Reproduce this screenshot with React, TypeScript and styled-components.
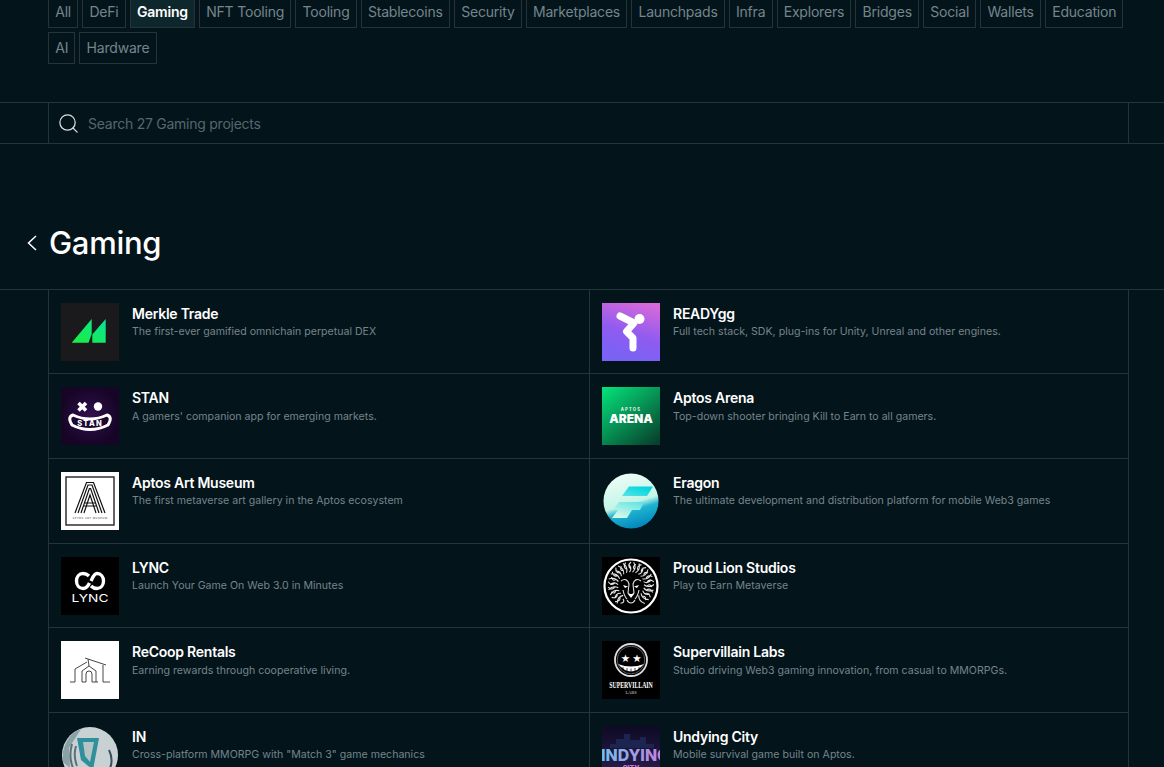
import React from "react";
import styled, { createGlobalStyle } from "styled-components";
import { Search } from "lucide-react";

const GlobalStyle = createGlobalStyle`
  html, body {
    margin: 0;
    height: 767px;
    overflow: hidden;
    background: #04141b;
    font-family: "Inter", "Liberation Sans", sans-serif;
  }
`;

const Page = styled.div`
  width: 1164px;
  height: 767px;
  overflow: hidden;
  box-sizing: border-box;
  padding-top: 1px;
`;

const TagList = styled.div`
  display: flex;
  flex-wrap: wrap;
  gap: 4px;
  margin: -5px 36px 0 48px;
`;

const Tag = styled.div<{ $active?: boolean }>`
  box-sizing: border-box;
  height: 32px;
  padding: 0 6.2px 1px;
  display: flex;
  align-items: center;
  border: 1px solid #25343a;
  background: ${(p) => (p.$active ? "#0e272d" : "transparent")};
  color: ${(p) => (p.$active ? "#ffffff" : "#74858c")};
  font-size: 14px;
  font-weight: ${(p) => (p.$active ? 600 : 400)};
  letter-spacing: -0.2px;
  white-space: nowrap;
`;

const SearchBar = styled.div`
  box-sizing: border-box;
  margin-top: 38px;
  height: 42px;
  border-top: 1px solid #25343a;
  border-bottom: 1px solid #25343a;
  padding: 0 35px 0 48px;
`;

const SearchInner = styled.div`
  height: 100%;
  display: flex;
  align-items: center;
  gap: 8px;
  padding-left: 8px;
  border-left: 1px solid #25343a;
  border-right: 1px solid #25343a;
  color: #56676d;
  font-size: 14px;
  letter-spacing: -0.25px;
  & svg {
    color: #d8dfe0;
  }
`;

const Heading = styled.div`
  margin-top: 76px;
  height: 45px;
  display: flex;
  align-items: center;
  gap: 12px;
  padding-left: 27px;
  color: #ffffff;
  font-size: 31px;
  font-weight: 500;
  letter-spacing: -0.3px;
`;

const ListOuter = styled.div`
  margin-top: 23.6px;
  border-top: 1px solid #25343a;
  padding: 0 35px 0 48px;
`;

const Grid = styled.div`
  display: grid;
  grid-template-columns: 541px 540px;
  border-right: 1px solid #25343a;
`;

const Cell = styled.div`
  box-sizing: border-box;
  height: 84.67px;
  padding: 13px 12px 0;
  display: flex;
  gap: 13px;
  border-left: 1px solid #25343a;
  border-bottom: 1px solid #25343a;
`;

const LogoBox = styled.div`
  width: 58px;
  height: 58px;
  flex: none;
  & svg {
    display: block;
    width: 58px;
    height: 58px;
  }
`;

const TextCol = styled.div`
  padding-top: 2px;
`;

const Title = styled.div`
  color: #ffffff;
  font-size: 14px;
  font-weight: 600;
  line-height: 18px;
  letter-spacing: -0.25px;
`;

const Desc = styled.div`
  margin-top: 1.5px;
  color: #74858c;
  font-size: 10.6px;
  line-height: 16px;
  white-space: nowrap;
`;

const BackChevron = () => (
  <svg width="10" height="16" viewBox="0 0 10 16" fill="none">
    <path d="M9 1 L1.5 8 L9 15" stroke="#ffffff" strokeWidth="1.5" />
  </svg>
);

const MerkleLogo = () => (
  <svg viewBox="0 0 58 58">
    <defs>
      <linearGradient id="mk" x1="0" y1="1" x2="1" y2="0">
        <stop offset="0" stopColor="#1bf03c" />
        <stop offset="1" stopColor="#08e29a" />
      </linearGradient>
    </defs>
    <rect width="58" height="58" fill="#1a1a1c" />
    <path d="M10.7 39.7 L30.7 16 V31 L27.5 39.7 Z M31.3 31.5 L44.7 16 V39.7 H31.3 Z" fill="url(#mk)" />
  </svg>
);

const ReadyLogo = () => (
  <svg viewBox="0 0 58 58">
    <defs>
      <linearGradient id="rd" x1="0.9" y1="0" x2="0.6" y2="1">
        <stop offset="0" stopColor="#dd69d9" />
        <stop offset="0.6" stopColor="#8f5bf0" />
        <stop offset="1" stopColor="#7a62f5" />
      </linearGradient>
    </defs>
    <rect width="58" height="58" fill="url(#rd)" />
    <circle cx="37.5" cy="16" r="5" fill="#fff" />
    <path d="M18 13 L32 20 L24.5 28.5 L31 35 V45" fill="none" stroke="#fff" strokeWidth="7" strokeLinecap="round" strokeLinejoin="round" />
  </svg>
);

const StanLogo = () => (
  <svg viewBox="0 0 58 58">
    <defs>
      <radialGradient id="st">
        <stop offset="0" stopColor="#32104f" />
        <stop offset="1" stopColor="#170527" />
      </radialGradient>
    </defs>
    <rect width="58" height="58" fill="url(#st)" />
    <path d="M17.5 16 L25 23.5 M25 16 L17.5 23.5" stroke="#fff" strokeWidth="3.6" />
    <circle cx="37" cy="19.5" r="4.2" fill="#fff" />
    <path d="M12 28 Q29 36 46 28 Q52 30 47 38 Q29 47 11 38 Q6 30 12 28 Z" fill="#1c0830" stroke="#fff" strokeWidth="3" />
    <text x="29" y="39" textAnchor="middle" fill="#fff" fontSize="7.5" fontWeight="800" letterSpacing="1.2" fontFamily="Inter, sans-serif">STAN</text>
  </svg>
);

const ArenaLogo = () => (
  <svg viewBox="0 0 58 58">
    <defs>
      <linearGradient id="ar" x1="0.1" y1="0" x2="0.9" y2="1">
        <stop offset="0" stopColor="#05dd78" />
        <stop offset="1" stopColor="#07412d" />
      </linearGradient>
    </defs>
    <rect width="58" height="58" fill="url(#ar)" />
    <text x="29" y="24" textAnchor="middle" fill="#e8f6ee" fontSize="4.2" fontWeight="700" letterSpacing="1.2" fontFamily="Inter, sans-serif">APTOS</text>
    <text x="29" y="36" textAnchor="middle" fill="#ffffff" fontSize="12" fontWeight="900" fontFamily="Inter, sans-serif">ARENA</text>
  </svg>
);

const ArtMuseumLogo = () => (
  <svg viewBox="0 0 58 58">
    <rect width="58" height="58" fill="#fff" />
    <rect x="5" y="5" width="48" height="48" fill="none" stroke="#222" strokeWidth="1.4" />
    <g fill="none" stroke="#111" strokeWidth="1.2">
      <path d="M14 41 L25.5 10.5 H32.5 L44 41" />
      <path d="M17 41 L27 13 H31 L41 41" />
      <path d="M20 41 L28.4 16.5 H29.6 L38 41" />
      <path d="M23 41 L29 23 L35 41" />
      <path d="M24 31 H34 M23 34 H35" />
    </g>
    <text x="29" y="47" textAnchor="middle" fill="#333" fontSize="2.6" letterSpacing="0.5" fontFamily="Inter, sans-serif">APTOS ART MUSEUM</text>
  </svg>
);

const EragonLogo = () => (
  <svg viewBox="0 0 58 58">
    <defs>
      <linearGradient id="eg" x1="0.3" y1="0" x2="0.6" y2="1">
        <stop offset="0" stopColor="#effdf7" />
        <stop offset="0.55" stopColor="#c3f5e7" />
        <stop offset="0.68" stopColor="#1fb4d0" />
        <stop offset="1" stopColor="#0186bd" />
      </linearGradient>
      <linearGradient id="eg2" x1="0.7" y1="0" x2="0.3" y2="1">
        <stop offset="0" stopColor="#05d5e0" />
        <stop offset="1" stopColor="#d2f8ea" />
      </linearGradient>
    </defs>
    <circle cx="29" cy="29" r="27.5" fill="url(#eg)" />
    <path d="M27 14.5 H51 L45 24 H20 Z M17 30 H42 L38 38 H30 L25 46 H10 L16 38 H11 Z" fill="url(#eg2)" />
  </svg>
);

const LyncLogo = () => (
  <svg viewBox="0 0 58 58">
    <rect width="58" height="58" fill="#000" />
    <g fill="none" stroke="#fff" strokeWidth="3.4">
      <path d="M28 19 C26 17 23 16.5 22 16.5 C18 16.5 15.5 20 15.5 24 C15.5 28 18 31.5 22 31.5 C25 31.5 27 29 28.5 26" />
      <path d="M30 24 C31.5 21 33 16.5 36 16.5 C40 16.5 42.5 20 42.5 24 C42.5 28 40 31.5 36 31.5 C34 31.5 32 31 30 29" />
    </g>
    <text x="29" y="45" textAnchor="middle" fill="#fff" fontSize="11" fontWeight="400" textLength="37" lengthAdjust="spacingAndGlyphs" fontFamily="Inter, sans-serif">LYNC</text>
  </svg>
);

// mane strands fan out around the face, wobble alternates so it reads as curls
const MANE = Array.from({ length: 44 }, (_, i) => {
  const a = ((i / 44) * 300 - 240) * (Math.PI / 180);
  const r1 = i % 2 ? 13 : 16;
  const r2 = i % 3 ? 23 : 21;
  const wob = i % 2 ? 0.22 : -0.22;
  const pt = (r: number, t: number) =>
    `${(29 + r * Math.cos(t)).toFixed(1)} ${(28 + r * Math.sin(t)).toFixed(1)}`;
  return `M${pt(r1, a)} Q${pt((r1 + r2) / 2, a + wob)} ${pt(r2, a)}`;
}).join(" ");

const LionLogo = () => (
  <svg viewBox="0 0 58 58">
    <rect width="58" height="58" fill="#000" />
    <circle cx="29" cy="29" r="26.5" fill="none" stroke="#fff" strokeWidth="2.2" />
    <path d={MANE} fill="none" stroke="#e4e4e4" strokeWidth="1.1" />
    <g fill="none" stroke="#e0e0e0" strokeWidth="1.1">
      <path d="M19 24 C23 21 26 23 27 27 L26 36 L29 39 L32 36 L31 27 C32 23 35 21 39 24" />
      <path d="M21 33 C22 38 24 41 25 42 M37 33 C36 38 34 41 33 42 M25 43 C27 47 31 47 33 43" />
    </g>
    <path d="M21 28 L26 29.5 L23 31 Z M37 28 L32 29.5 L35 31 Z M26 37 H32 L29 41 Z" fill="#fff" />
  </svg>
);

const RecoopLogo = () => (
  <svg viewBox="0 0 58 58">
    <rect width="58" height="58" fill="#fff" />
    <g fill="none" stroke="#333" strokeWidth="0.9">
      <path d="M9 41 H14 V28 L26 21" />
      <path d="M24 17 L45 24 M27 18 L28 25 L21 30 V41 H25 V33 Q25 30 28 30 Q31 30 31 33 V41 M28 25 L35 30 V41 H31" />
      <path d="M42 24 V41 H49 M35 41 H37" />
    </g>
  </svg>
);

const VillainLogo = () => (
  <svg viewBox="0 0 58 58">
    <rect width="58" height="58" fill="#000" />
    <circle cx="29" cy="19" r="16" fill="none" stroke="#ddd" strokeWidth="1.8" />
    <circle cx="29" cy="19" r="13.8" fill="none" stroke="#777" strokeWidth="0.8" />
    <text x="23.5" y="20.5" textAnchor="middle" fill="#fff" fontSize="10.5" fontFamily="DejaVu Sans, sans-serif">★</text>
    <text x="35" y="20.5" textAnchor="middle" fill="#fff" fontSize="10.5" fontFamily="DejaVu Sans, sans-serif">★</text>
    <path d="M16 23 Q29 38 42 23 Q29 28 16 23 Z" fill="#fff" />
    <path d="M21 26 V30 M25 27 V32 M29 27.5 V33 M33 27 V32 M37 26 V30" stroke="#000" strokeWidth="0.7" />
    <text transform="translate(29 46.5) scale(1 1.6)" textAnchor="middle" fill="#fff" fontSize="5.8" fontWeight="700" fontFamily="Liberation Serif, serif">SUPERVILLAIN</text>
    <text x="29" y="52.5" textAnchor="middle" fill="#ddd" fontSize="4.4" fontFamily="Liberation Serif, serif">LABS</text>
  </svg>
);

const InLogo = () => (
  <svg viewBox="0 0 58 58">
    <circle cx="29" cy="29" r="28" fill="#c8d2d4" />
    <path d="M2 26 Q6 8 20 3 L8 22 L9 42 L2 36 Z" fill="#8aa1a6" />
    <path d="M16 12 H38 L32 44 L20 34 Z" fill="#2f8f9a" />
    <path d="M22 16 H33 L29 36 L24 30 Z" fill="#b4c4c7" />
    <path d="M48 24 Q54 36 46 48" fill="none" stroke="#3a4f56" strokeWidth="2" />
    <path d="M11 18 Q7 32 13 44 M15 20 Q12 30 16 40" fill="none" stroke="#5b7178" strokeWidth="2" />
  </svg>
);

const UndyingLogo = () => (
  <svg viewBox="0 0 58 58">
    <defs>
      <linearGradient id="ud" x1="0" y1="0" x2="0" y2="1">
        <stop offset="0" stopColor="#0e0a24" />
        <stop offset="1" stopColor="#2c2358" />
      </linearGradient>
      <linearGradient id="ut" x1="0" y1="0" x2="1" y2="0">
        <stop offset="0" stopColor="#6fc1ee" />
        <stop offset="1" stopColor="#d07bd8" />
      </linearGradient>
    </defs>
    <rect width="58" height="58" fill="url(#ud)" />
    <path d="M8 22 V18 H14 V13 H22 V8 H28 V14 H38 V11 H44 V18 H52 V22 Z" fill="#1c2450" />
    <text x="33" y="35" textAnchor="middle" fill="url(#ut)" fontSize="16" fontWeight="800" textLength="68" lengthAdjust="spacingAndGlyphs" fontFamily="Inter, sans-serif">INDYING</text>
    <text x="29" y="45" textAnchor="middle" fill="#c27ae0" fontSize="7" fontWeight="800" fontFamily="Inter, sans-serif">CITY</text>
  </svg>
);

const TAGS = [
  "All",
  "DeFi",
  "Gaming",
  "NFT Tooling",
  "Tooling",
  "Stablecoins",
  "Security",
  "Marketplaces",
  "Launchpads",
  "Infra",
  "Explorers",
  "Bridges",
  "Social",
  "Wallets",
  "Education",
  "AI",
  "Hardware",
];

const PROJECTS = [
  { name: "Merkle Trade", desc: "The first-ever gamified omnichain perpetual DEX", logo: <MerkleLogo /> },
  { name: "READYgg", desc: "Full tech stack, SDK, plug-ins for Unity, Unreal and other engines.", logo: <ReadyLogo /> },
  { name: "STAN", desc: "A gamers' companion app for emerging markets.", logo: <StanLogo /> },
  { name: "Aptos Arena", desc: "Top-down shooter bringing Kill to Earn to all gamers.", logo: <ArenaLogo /> },
  { name: "Aptos Art Museum", desc: "The first metaverse art gallery in the Aptos ecosystem", logo: <ArtMuseumLogo /> },
  { name: "Eragon", desc: "The ultimate development and distribution platform for mobile Web3 games", logo: <EragonLogo /> },
  { name: "LYNC", desc: "Launch Your Game On Web 3.0 in Minutes", logo: <LyncLogo /> },
  { name: "Proud Lion Studios", desc: "Play to Earn Metaverse", logo: <LionLogo /> },
  { name: "ReCoop Rentals", desc: "Earning rewards through cooperative living.", logo: <RecoopLogo /> },
  { name: "Supervillain Labs", desc: "Studio driving Web3 gaming innovation, from casual to MMORPGs.", logo: <VillainLogo /> },
  { name: "IN", desc: 'Cross-platform MMORPG with "Match 3" game mechanics', logo: <InLogo /> },
  { name: "Undying City", desc: "Mobile survival game built on Aptos.", logo: <UndyingLogo /> },
];

const App = () => {
  return (
    <Page>
      <GlobalStyle />
      <TagList>
        {TAGS.map((tag) => (
          <Tag key={tag} $active={tag === "Gaming"}>
            {tag}
          </Tag>
        ))}
      </TagList>
      <SearchBar>
        <SearchInner>
          <Search size={23} strokeWidth={1.3} />
          Search 27 Gaming projects
        </SearchInner>
      </SearchBar>
      <Heading>
        <BackChevron />
        Gaming
      </Heading>
      <ListOuter>
        <Grid>
          {PROJECTS.map((p) => (
            <Cell key={p.name}>
              <LogoBox>{p.logo}</LogoBox>
              <TextCol>
                <Title>{p.name}</Title>
                <Desc>{p.desc}</Desc>
              </TextCol>
            </Cell>
          ))}
        </Grid>
      </ListOuter>
    </Page>
  );
};

export default App;
